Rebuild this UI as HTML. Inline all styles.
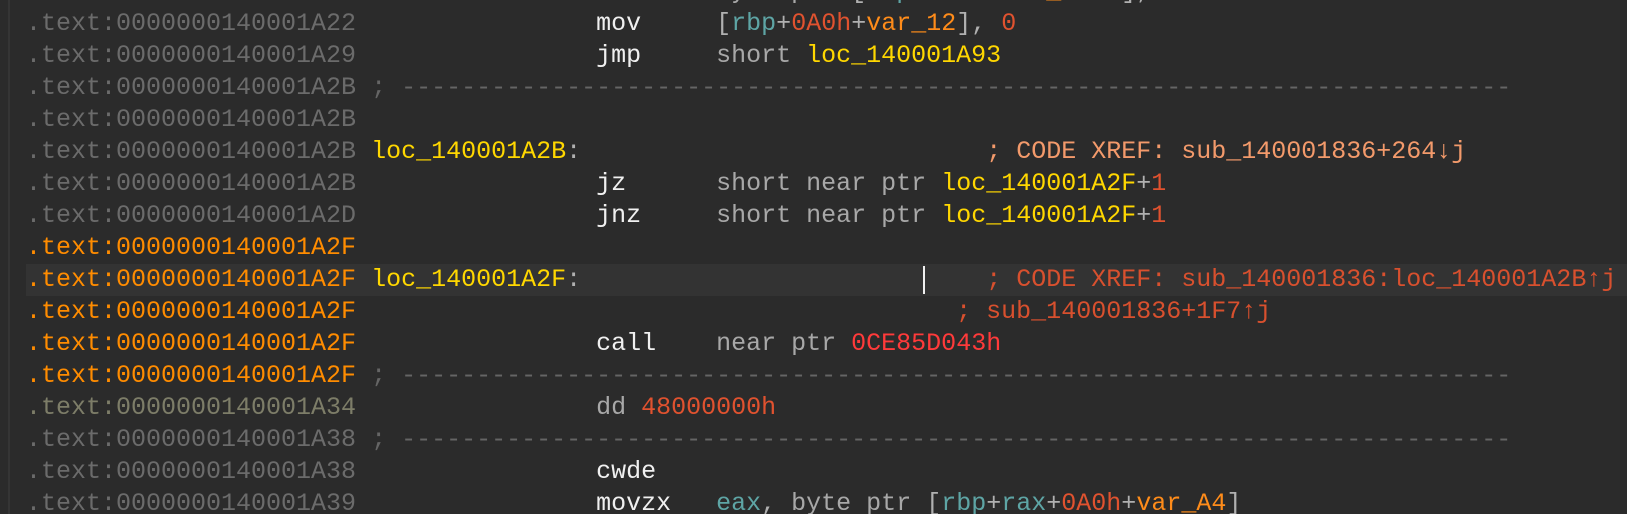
<!DOCTYPE html>
<html><head><meta charset="utf-8"><style>
html,body{margin:0;padding:0;background:#2b2b2b;width:1627px;height:514px;overflow:hidden}
#w{position:relative;width:1627px;height:514px;font-family:"Liberation Mono",monospace;font-size:25px;}
.r{position:absolute;left:26px;height:32px;line-height:32px;white-space:pre;color:#e6e6e6;width:1601px}
.hl{background:#333333;left:26px}
.a{color:#6b6b6b}.o{color:#ff8c00}.ol{color:#7d7d68}
.y{color:#ffd700}.m{color:#f0f0f0}.g{color:#a8a8a8}.t{color:#5ea5a5}
.n{color:#e0522f}.v{color:#ff8c1a}.c1{color:#f39a6b}.c2{color:#d8502e}.rd{color:#ff3a3a}
.d{color:#656565}.p{color:#b0b0b0}
#bar{position:absolute;left:8px;top:0;width:2px;height:514px;background:#353535}
#cur{position:absolute;left:923px;top:266px;width:2px;height:28px;background:#f0f0f0}
</style></head><body><div id="w">
<div id="bar"></div>
<div class="r" style="top:-24px"><span class="a">.text:0000000140001A1F</span>                <span class="m">mov</span>     <span class="g">byte ptr </span><span class="p">[</span><span class="t">rbp</span><span class="p">+</span><span class="n">0A0h</span><span class="p">+</span><span class="v">var_A7+3</span><span class="p">], </span><span class="t">dl</span></div>
<div class="r" style="top:8px"><span class="a">.text:0000000140001A22</span>                <span class="m">mov</span>     <span class="p">[</span><span class="t">rbp</span><span class="p">+</span><span class="n">0A0h</span><span class="p">+</span><span class="v">var_12</span><span class="p">], </span><span class="n">0</span></div>
<div class="r" style="top:40px"><span class="a">.text:0000000140001A29</span>                <span class="m">jmp</span>     <span class="g">short </span><span class="y">loc_140001A93</span></div>
<div class="r" style="top:72px"><span class="a">.text:0000000140001A2B</span> <span class="d">; --------------------------------------------------------------------------</span></div>
<div class="r" style="top:104px"><span class="a">.text:0000000140001A2B</span></div>
<div class="r" style="top:136px"><span class="a">.text:0000000140001A2B</span> <span class="y">loc_140001A2B</span><span class="p">:</span>                           <span class="c1">; CODE XREF: sub_140001836+264↓j</span></div>
<div class="r" style="top:168px"><span class="a">.text:0000000140001A2B</span>                <span class="m">jz</span>      <span class="g">short near ptr </span><span class="y">loc_140001A2F</span><span class="p">+</span><span class="n">1</span></div>
<div class="r" style="top:200px"><span class="a">.text:0000000140001A2D</span>                <span class="m">jnz</span>     <span class="g">short near ptr </span><span class="y">loc_140001A2F</span><span class="p">+</span><span class="n">1</span></div>
<div class="r" style="top:232px"><span class="o">.text:0000000140001A2F</span></div>
<div class="r hl" style="top:264px"><span class="o">.text:0000000140001A2F</span> <span class="y">loc_140001A2F</span><span class="p">:</span>                           <span class="c2">; CODE XREF: sub_140001836:loc_140001A2B↑j</span></div>
<div class="r" style="top:296px"><span class="o">.text:0000000140001A2F</span>                                        <span class="c2">; sub_140001836+1F7↑j</span></div>
<div class="r" style="top:328px"><span class="o">.text:0000000140001A2F</span>                <span class="m">call</span>    <span class="g">near ptr </span><span class="rd">0CE85D043h</span></div>
<div class="r" style="top:360px"><span class="o">.text:0000000140001A2F</span> <span class="d">; --------------------------------------------------------------------------</span></div>
<div class="r" style="top:392px"><span class="ol">.text:0000000140001A34</span>                <span class="g">dd </span><span class="n">48000000h</span></div>
<div class="r" style="top:424px"><span class="a">.text:0000000140001A38</span> <span class="d">; --------------------------------------------------------------------------</span></div>
<div class="r" style="top:456px"><span class="a">.text:0000000140001A38</span>                <span class="m">cwde</span></div>
<div class="r" style="top:488px"><span class="a">.text:0000000140001A39</span>                <span class="m">movzx</span>   <span class="t">eax</span><span class="p">, </span><span class="g">byte ptr </span><span class="p">[</span><span class="t">rbp</span><span class="p">+</span><span class="t">rax</span><span class="p">+</span><span class="n">0A0h</span><span class="p">+</span><span class="v">var_A4</span><span class="p">]</span></div>
<div id="cur"></div>
</div></body></html>
